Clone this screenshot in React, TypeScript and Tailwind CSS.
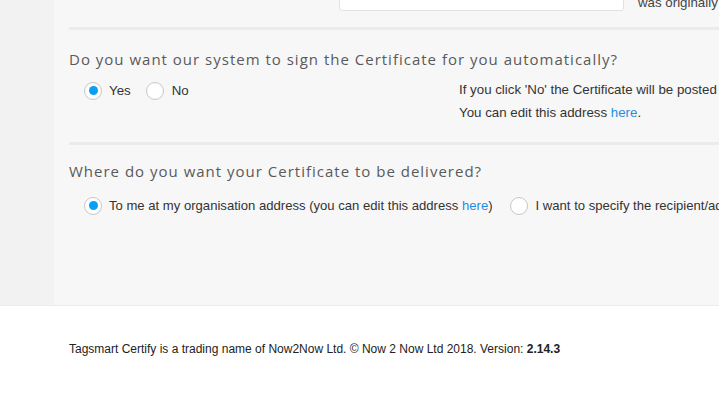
import { useState } from 'react';

function Radio({ checked, onClick }: { checked: boolean; onClick: () => void }) {
  return (
    <button
      type="button"
      onClick={onClick}
      className="w-[18px] h-[18px] shrink-0 rounded-full border border-[#c8c8c8] bg-white flex items-center justify-center"
    >
      {checked && <span className="w-[9px] h-[9px] rounded-full bg-[#0a9ef5]" />}
    </button>
  );
}

export default function App() {
  const [sign, setSign] = useState<'yes' | 'no'>('yes');
  const [deliver, setDeliver] = useState<'org' | 'other'>('org');

  return (
    <div
      className="w-screen overflow-hidden bg-white text-[#333] text-[13.3px]"
      style={{ fontFamily: '"Liberation Sans", Arial, sans-serif' }}
    >
      <div className="flex h-[306px] border-b border-[#ececec]">
        {/* sidebar */}
        <div className="w-[54px] shrink-0 bg-[#f2f2f2]" />

        {/* form */}
        <div className="flex-1 bg-[#f7f7f7] pl-[15px] whitespace-nowrap">
          {/* leftover of previous field */}
          <div className="flex items-start h-[27px]">
            <div className="ml-[270px] mt-[-24px] w-[285px] h-[35px] bg-white border border-[#e2e2e2] rounded-[3px]" />
            <span className="ml-[14px] mt-[-7px] text-[#444]">was originally</span>
          </div>

          {/* sign automatically */}
          <div className="border-t-[3px] border-[#ebebeb] min-w-[800px]">
            <h3
              className="mt-[19px] text-[15px] leading-[20px] tracking-[1px] text-[#5a5a5a]"
              style={{ fontFamily: '"Open Sans", sans-serif' }}
            >
              Do you want our system to sign the Certificate for you automatically?
            </h3>
            <div className="flex mt-[11px] h-[62px]">
              <div className="flex items-start pl-[15px] w-[390px] pt-[1px]">
                <label className="flex items-center gap-[7px] mr-[15px]">
                  <Radio checked={sign === 'yes'} onClick={() => setSign('yes')} />
                  <span>Yes</span>
                </label>
                <label className="flex items-center gap-[8px]">
                  <Radio checked={sign === 'no'} onClick={() => setSign('no')} />
                  <span>No</span>
                </label>
              </div>
              <div className="leading-[23px] mt-[-2px]">
                <p>If you click 'No' the Certificate will be posted to you for signing.</p>
                <p>
                  You can edit this address <a className="text-[#1a8fe3]">here</a>.
                </p>
              </div>
            </div>
          </div>

          {/* delivery */}
          <div className="border-t-[3px] border-[#ebebeb] min-w-[800px]">
            <h3
              className="mt-[16px] text-[15px] leading-[20px] tracking-[1px] text-[#5a5a5a]"
              style={{ fontFamily: '"Open Sans", sans-serif' }}
            >
              Where do you want your Certificate to be delivered?
            </h3>
            <div className="flex items-center pl-[15px] mt-[15px] text-[13.1px]">
              <label className="flex items-center gap-[7px] mr-[17px]">
                <Radio checked={deliver === 'org'} onClick={() => setDeliver('org')} />
                <span>
                  To me at my organisation address (you can edit this address{' '}
                  <a className="text-[#1a8fe3]">here</a>)
                </span>
              </label>
              <label className="flex items-center gap-[8px]">
                <Radio checked={deliver === 'other'} onClick={() => setDeliver('other')} />
                <span>I want to specify the recipient/address</span>
              </label>
            </div>
          </div>
        </div>
      </div>

      {/* footer */}
      <footer className="h-[92px] pl-[69px] pt-[34px] text-[12px] text-[#222]">
        Tagsmart Certify is a trading name of Now2Now Ltd. © Now 2 Now Ltd 2018. Version:{' '}
        <b>2.14.3</b>
      </footer>
    </div>
  );
}
